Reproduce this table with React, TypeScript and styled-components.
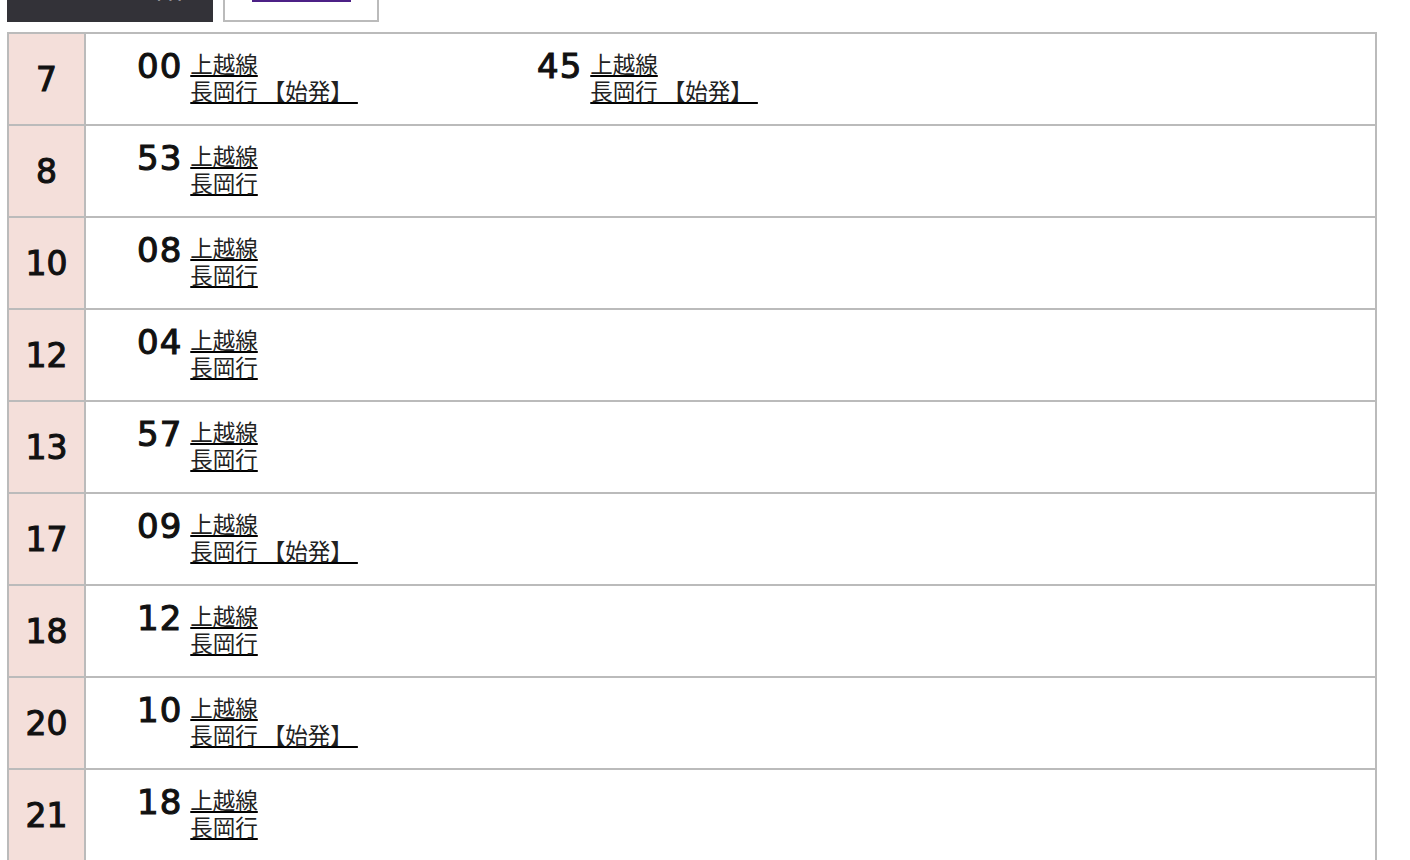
import React from "react";
import styled, { createGlobalStyle } from "styled-components";

const GlobalStyle = createGlobalStyle`
  html, body {
    margin: 0;
    padding: 0;
    background: #ffffff;
  }
  body {
    font-family: "Noto Sans CJK JP", "Noto Sans", sans-serif;
    color: #222;
  }
`;

const Page = styled.div`
  padding: 0 0 40px 7px;
`;

const TopBar = styled.div`
  display: flex;
  gap: 10px;
  height: 44px;
  margin-top: -22px;
  margin-bottom: 10px;
`;

const DarkTab = styled.div`
  box-sizing: border-box;
  width: 206px;
  background: #333238;
  color: #8f8e94;
  display: flex;
  align-items: flex-start;
  justify-content: flex-end;
  padding: 5px 30px 0 0;
  font-size: 16px;
  line-height: 18px;
  font-weight: 700;
`;

const LightTab = styled.div`
  box-sizing: border-box;
  width: 156px;
  border: 2px solid #bbbbbb;
  background: #fff;
  display: flex;
  flex-direction: column;
  justify-content: flex-end;
  align-items: center;
  padding-bottom: 18px;
`;

const TabLink = styled.a`
  display: block;
  width: 99px;
  border-bottom: 2px solid #4c2086;
  color: #4c2086;
  text-decoration: none;
  font-size: 16px;
  line-height: 18px;
  text-align: center;
  padding-top: 2px;
`;

const Table = styled.table`
  border-collapse: separate;
  border-spacing: 0;
  width: 1370px;
  border-top: 2px solid #bbbbbb;
  border-left: 2px solid #bbbbbb;
`;

const HourCell = styled.td`
  width: 75px;
  height: 90px;
  padding: 0;
  background: #f4dfda;
  border-right: 2px solid #bbbbbb;
  border-bottom: 2px solid #bbbbbb;
  text-align: center;
  vertical-align: middle;
  font-family: "DejaVu Sans", "Noto Sans", sans-serif;
  font-size: 33px;
  font-weight: 400;
  -webkit-text-stroke: 1.1px #111;
  color: #111;
  line-height: 1;
`;

const MinuteCell = styled.td`
  height: 90px;
  padding: 0 0 0 51px;
  border-right: 2px solid #bbbbbb;
  border-bottom: 2px solid #bbbbbb;
  vertical-align: middle;
`;

const Entries = styled.div`
  display: flex;
  align-items: flex-start;
  padding-bottom: 4px;
`;

const Entry = styled.div`
  width: 400px;
  display: flex;
  align-items: flex-start;
  gap: 8px;
`;

const Minute = styled.span`
  display: block;
  font-family: "DejaVu Sans", "Noto Sans", sans-serif;
  font-size: 34px;
  font-weight: 400;
  -webkit-text-stroke: 1.1px #111;
  letter-spacing: 1px;
  line-height: 1;
  color: #111;
  margin-top: -1px;
`;

const TrainLink = styled.a`
  display: block;
  font-size: 22.5px;
  line-height: 27px;
  color: #222;
  text-decoration: underline;
  text-decoration-color: #000;
  text-underline-offset: 2px;
  white-space: pre;
`;

type Departure = { m: string; first?: boolean };
type Row = { hour: number; entries: Departure[] };

const rows: Row[] = [
  { hour: 7, entries: [{ m: "00", first: true }, { m: "45", first: true }] },
  { hour: 8, entries: [{ m: "53" }] },
  { hour: 10, entries: [{ m: "08" }] },
  { hour: 12, entries: [{ m: "04" }] },
  { hour: 13, entries: [{ m: "57" }] },
  { hour: 17, entries: [{ m: "09", first: true }] },
  { hour: 18, entries: [{ m: "12" }] },
  { hour: 20, entries: [{ m: "10", first: true }] },
  { hour: 21, entries: [{ m: "18" }] },
];

export default function App() {
  return (
    <Page>
      <GlobalStyle />
      <TopBar>
        <DarkTab>平日</DarkTab>
        <LightTab>
          <TabLink href="#">土曜・休日</TabLink>
        </LightTab>
      </TopBar>
      <Table>
        <tbody>
          {rows.map((r) => (
            <tr key={r.hour}>
              <HourCell>{r.hour}</HourCell>
              <MinuteCell>
                <Entries>
                  {r.entries.map((e) => (
                    <Entry key={e.m}>
                      <Minute>{e.m}</Minute>
                      <TrainLink href="#">
                        上越線
                        <br />
                        {e.first ? "長岡行 【始発】 " : "長岡行"}
                      </TrainLink>
                    </Entry>
                  ))}
                </Entries>
              </MinuteCell>
            </tr>
          ))}
        </tbody>
      </Table>
    </Page>
  );
}
